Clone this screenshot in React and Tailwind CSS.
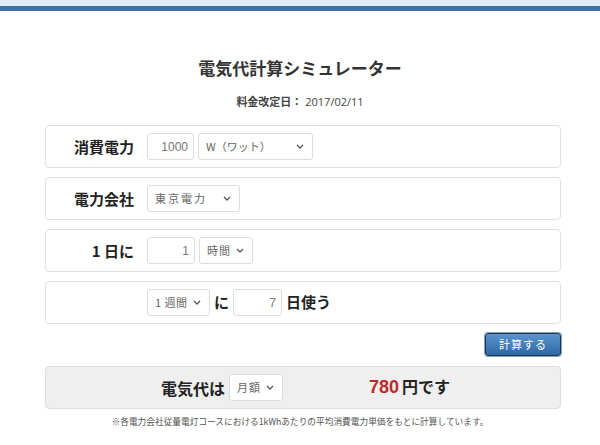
import React from "react";

const JP = { fontFamily: '"Noto Sans CJK JP", "Noto Sans", sans-serif' };

function Chevron() {
  return (
    <svg width="8" height="5" viewBox="0 0 8 5" className="shrink-0">
      <path d="M1 1 L4 4 L7 1" fill="none" stroke="#555" strokeWidth="1.3" />
    </svg>
  );
}

function Select({ w, children, textClass = "" }) {
  return (
    <div
      className={`flex h-[27px] items-center justify-between rounded-[3px] border border-[#dcdcdc] bg-white pl-[7px] pr-[8px] text-[11px] text-[#666] ${w} ${textClass}`}
    >
      <span className="leading-none">{children}</span>
      <Chevron />
    </div>
  );
}

function Input({ w, value }) {
  return (
    <div
      className={`flex h-[27px] items-center justify-end rounded-[3px] border border-[#dcdcdc] bg-white pr-[5px] text-[12px] text-[#777] ${w}`}
      style={{ fontFamily: '"Liberation Sans", Arial, sans-serif' }}
    >
      {value}
    </div>
  );
}

function Card({ label, children }) {
  return (
    <div className="flex h-[43px] items-center rounded-[4px] border border-[#e0e0e0] bg-white">
      <div className="w-[88px] text-right text-[15px] font-bold leading-none text-[#222]">{label}</div>
      <div className="ml-[13px] flex items-center gap-[4px]">{children}</div>
    </div>
  );
}

export default function App() {
  return (
    <div className="h-[445px] w-[600px] overflow-hidden bg-white" style={JP}>
      <div className="h-[6px] bg-[#dde9f4]" />
      <div className="h-[5px] bg-[#3d71a7]" />
      <div className="mt-[45px] text-center text-[17px] font-bold leading-[24px] text-[#333]">
        電気代計算シミュレーター
      </div>
      <div className="mt-[13px] text-center text-[11px] leading-[16px] text-[#444]">
        <span className="font-bold">料金改定日：</span>
        <span style={{ fontFamily: '"Open Sans", sans-serif' }}> 2017/02/11</span>
      </div>
      <div className="ml-[45px] mt-[15px] flex w-[516px] flex-col gap-[9px]">
        <Card label="消費電力">
          <Input w="w-[47px]" value="1000" />
          <Select w="w-[115px]">W（ワット）</Select>
        </Card>
        <Card label="電力会社">
          <Select w="w-[93px]" textClass="tracking-[2px]">東京電力</Select>
        </Card>
        <Card label="1 日に">
          <Input w="w-[48px]" value="1" />
          <Select w="w-[54px]" textClass="tracking-[1px]">時間</Select>
        </Card>
        <Card label="">
          <Select w="w-[63px]" textClass="tracking-[0.5px]">1 週間</Select>
          <span className="text-[15px] font-bold text-[#222]">に</span>
          <Input w="w-[49px]" value="7" />
          <span className="text-[15px] font-bold text-[#222]">日使う</span>
        </Card>
      </div>
      <div className="ml-[45px] mt-[9px] flex w-[516px] justify-end">
        <div className="flex h-[23px] w-[76px] items-center justify-center rounded-[3px] border border-[#1e3550] bg-gradient-to-b from-[#5a95d0] to-[#2d68a6] text-[11px] tracking-[1px] text-white shadow-[0_0_0_1px_#8aa0b8]">
          計算する
        </div>
      </div>
      <div className="ml-[45px] mt-[10px] flex h-[43px] w-[516px] items-center rounded-[4px] border border-[#dedede] bg-[#efefef]">
        <div className="ml-[115px] text-[16px] font-bold leading-none text-[#222]">電気代は</div>
        <div className="ml-[4px]">
          <Select w="w-[54px]" textClass="tracking-[1px]">月額</Select>
        </div>
        <div className="ml-[86px] flex items-baseline">
          <span className="text-[18px] font-bold text-[#c0272d]" style={{ fontFamily: '"Liberation Sans", Arial, sans-serif' }}>780</span>
          <span className="ml-[3px] text-[16px] font-bold text-[#222]">円です</span>
        </div>
      </div>
      <div className="mt-[6px] text-center text-[8.7px] leading-[14px] text-[#555]">
        ※各電力会社従量電灯コースにおける1kWhあたりの平均消費電力単価をもとに計算しています。
      </div>
    </div>
  );
}
